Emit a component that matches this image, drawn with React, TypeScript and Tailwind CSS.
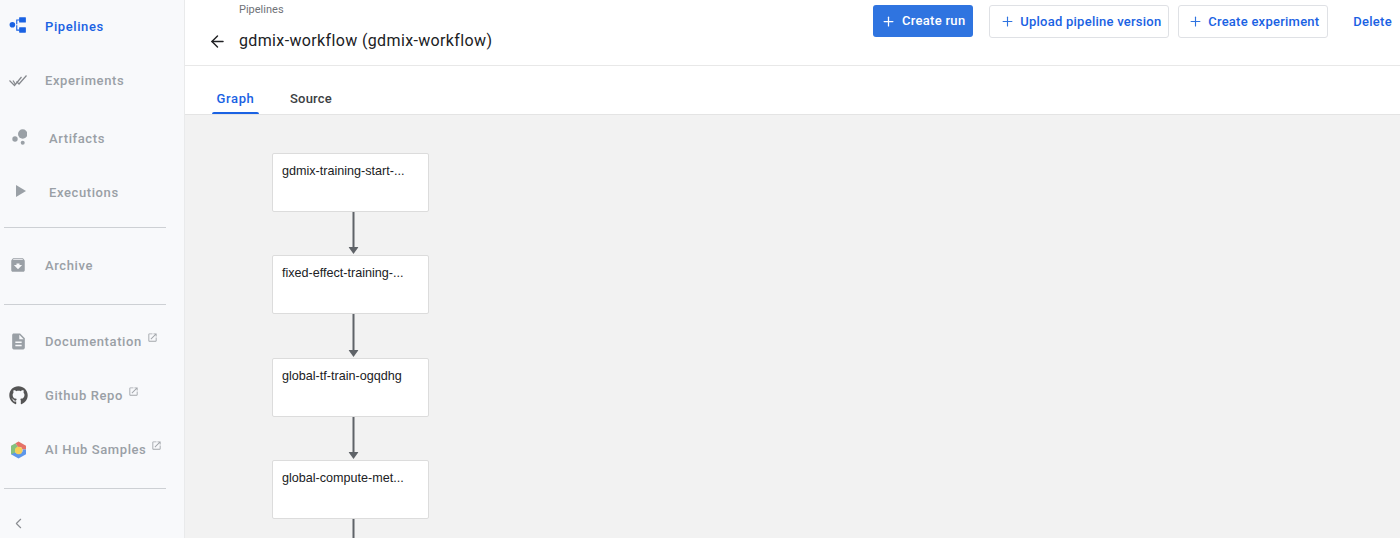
import { ArrowLeft, ChevronLeft, Plus } from "lucide-react";
import type { ReactNode } from "react";
import { FaGithub } from "react-icons/fa";
import { MdArchive, MdDescription, MdOpenInNew } from "react-icons/md";

const PipelinesIcon = () => (
  <svg width="18" height="18" viewBox="0 0 16 16" className="-mt-[2px] text-[#1a62e3]" fill="currentColor">
    <rect x="9" y="1" width="6" height="4.8" rx="0.5" />
    <rect x="9" y="10" width="6" height="4.8" rx="0.5" />
    <circle cx="3" cy="7.8" r="2.5" />
    <path d="M3 7.3h3.4V3h3v1H7.4v3.3H5v1h2.4V12h2v1H6.4V8.3H3z" />
  </svg>
);

const ExperimentsIcon = () => (
  <svg width="18" height="13" viewBox="0 0 18 13" fill="none" stroke="#85888d" strokeWidth="1.2">
    <path d="M0.5 6.5L5.5 11.5 12.5 3" />
    <path d="M4 6.5l2.5 4" />
    <path d="M7.5 7.5L10 10 17.5 1.5" />
  </svg>
);

const ArtifactsIcon = () => (
  <svg width="18" height="18" viewBox="0 0 18 18" fill="#9aa0a6">
    <circle cx="13.7" cy="5" r="4.7" />
    <circle cx="6" cy="10" r="2.7" />
    <circle cx="13.7" cy="13.7" r="2" />
  </svg>
);

const ExecutionsIcon = () => (
  <svg width="18" height="14" viewBox="0 0 18 14" fill="#9aa0a6">
    <path d="M7 0L17 6 7 12z" />
  </svg>
);

const AiHubIcon = () => (
  <svg width="17" height="18" viewBox="0 0 17 18" className="mt-[2px]">
    <path d="M1 4.7L5.5 2.2 8 6 5.5 8v5.5L1 13.3z" fill="#85c17e" />
    <path d="M5.5 2.2L8.5.5 16 4.7v3.8h-3.5L11 6H8z" fill="#e57368" />
    <path d="M1 13.3l4.5-1.8L8.5 13l4-2.5V8.5H16v4.8l-7.5 4.2z" fill="#5e97ea" />
    <circle cx="8.7" cy="9.5" r="3.7" fill="#f6cf58" />
  </svg>
);

const External = () => <MdOpenInNew className="ml-[5px] -mt-[7px] shrink-0 text-[#a2a6ab]" size={11} />;

const NavItem = ({
  icon,
  label,
  rowHeight,
  indented,
  active,
  external,
}: {
  icon: ReactNode;
  label: string;
  rowHeight: string;
  indented?: boolean;
  active?: boolean;
  external?: boolean;
}) => (
  <div className={`flex shrink-0 items-center ${rowHeight}`}>
    <div className="flex w-9 shrink-0 justify-center">{icon}</div>
    <span
      className={`mt-[2px] text-[13px] font-medium tracking-[0.6px] ${indented ? "ml-[13px]" : "ml-[9px]"} ${
        active ? "text-[#1a62e3]" : "text-[#9aa0a6]"
      }`}
    >
      {label}
    </span>
    {external && <External />}
  </div>
);

const Divider = ({ className }: { className: string }) => (
  <div className={`ml-1 h-px w-[162px] shrink-0 bg-[#cdd0d4] ${className}`} />
);

const Sidebar = () => (
  <aside className="flex h-full w-[185px] shrink-0 flex-col border-r border-[#e9eaeb] bg-[#f8f9fb]">
    <NavItem icon={<PipelinesIcon />} label="Pipelines" rowHeight="h-[52px]" active />
    <NavItem icon={<ExperimentsIcon />} label="Experiments" rowHeight="h-[56px]" />
    <NavItem icon={<ArtifactsIcon />} label="Artifacts" rowHeight="h-[60px]" indented />
    <NavItem icon={<ExecutionsIcon />} label="Executions" rowHeight="h-[48px]" indented />
    <Divider className="mt-[11px]" />
    <NavItem icon={<MdArchive size={18} color="#9aa0a6" />} label="Archive" rowHeight="h-[74px]" />
    <Divider className="mt-[2px]" />
    <div className="mt-[9px]" />
    <NavItem icon={<MdDescription size={19} color="#9aa0a6" />} label="Documentation" rowHeight="h-[54px]" external />
    <NavItem icon={<FaGithub size={19} color="#555" />} label="Github Repo" rowHeight="h-[54px]" external />
    <NavItem icon={<AiHubIcon />} label="AI Hub Samples" rowHeight="h-[54px]" external />
    <Divider className="mt-[12px]" />
    <div className="flex h-[49px] w-9 shrink-0 items-center justify-center pt-[19px]">
      <ChevronLeft size={17} strokeWidth={1.6} color="#8a8d92" />
    </div>
  </aside>
);

const OutlineButton = ({ label, className }: { label: string; className: string }) => (
  <button
    className={`flex h-[33px] items-center gap-[5px] rounded-[3px] border border-[#dfe1e5] bg-white text-[13px] font-medium tracking-[0.25px] text-[#1a62e3] ${className}`}
  >
    <Plus size={15} strokeWidth={1.8} color="#2f74e0" />
    {label}
  </button>
);

const Header = () => (
  <div className="flex h-[66px] shrink-0 border-b border-[#e8e8e8] bg-white">
    <div className="ml-[23px] pt-[3px]">
      <div className="ml-[31px] text-[11px] leading-[14px] text-[#6f7277]">Pipelines</div>
      <div className="mt-[12px] flex items-center">
        <ArrowLeft size={19} strokeWidth={1.8} color="#202124" />
        <h1 className="ml-[12px] text-[16px] leading-[24px] tracking-[0.36px] text-[#202124]">
          gdmix-workflow (gdmix-workflow)
        </h1>
      </div>
    </div>
    <div className="ml-auto flex items-start pt-[5px]">
      <button className="flex h-[32px] w-[100px] items-center justify-center gap-[6px] rounded-[3px] bg-[#2f74e0] text-[13px] font-medium tracking-[0.3px] text-white">
        <Plus size={15} strokeWidth={2} />
        Create run
      </button>
      <OutlineButton label="Upload pipeline version" className="ml-4 w-[180px] pl-[10px]" />
      <OutlineButton label="Create experiment" className="ml-[9px] w-[150px] pl-[9px]" />
      <span className="ml-[25px] mr-2 pt-[7px] text-[13px] font-medium tracking-[0.3px] text-[#1a62e3]">Delete</span>
    </div>
  </div>
);

const Tabs = () => (
  <div className="flex h-[49px] shrink-0 border-b border-[#e4e4e4] bg-white pl-[27px]">
    <div className="relative h-full w-[47px] pt-[25px] text-center text-[13px] font-medium leading-[16px] tracking-[0.6px] text-[#1a62e3]">
      Graph
      <div className="absolute bottom-0 left-0 h-[2px] w-full rounded-t-[2px] bg-[#1a62e3]" />
    </div>
    <div className="ml-[31px] pt-[25px] text-[13px] font-medium leading-[16px] tracking-[0.2px] text-[#3c4043]">
      Source
    </div>
  </div>
);

const Edge = ({ height }: { height: string }) => (
  <div className={`flex translate-x-[2.5px] flex-col items-center pb-[1px] ${height}`}>
    <div className="w-[2px] flex-1 bg-[#5f6368]" />
    <svg width="10" height="7" viewBox="0 0 10 7" fill="#5f6368" className="shrink-0">
      <path d="M0 0h10L5 7z" />
    </svg>
  </div>
);

const GraphNode = ({ title }: { title: string }) => (
  <div className="h-[59px] rounded-[2px] border border-[#dcdcdc] bg-white pl-[9px] pt-[10px] text-[12.6px] leading-[14px] text-[#202124]">
    {title}
  </div>
);

const Graph = () => (
  <div className="flex-1 overflow-hidden bg-[#f2f2f2] pl-[87px] pt-[38px]">
    <div className="flex w-[157px] flex-col font-['Liberation_Sans',sans-serif]">
      <GraphNode title="gdmix-training-start-..." />
      <Edge height="h-[43px]" />
      <GraphNode title="fixed-effect-training-..." />
      <Edge height="h-[44px]" />
      <GraphNode title="global-tf-train-ogqdhg" />
      <Edge height="h-[43px]" />
      <GraphNode title="global-compute-met..." />
      <div className="mx-auto h-[40px] w-[2px] translate-x-[2.5px] bg-[#5f6368]" />
    </div>
  </div>
);

export default function App() {
  return (
    <div className="flex h-[538px] w-[1400px] overflow-hidden bg-white font-['Roboto',sans-serif]">
      <Sidebar />
      <main className="flex min-w-0 flex-1 flex-col">
        <Header />
        <Tabs />
        <Graph />
      </main>
    </div>
  );
}
